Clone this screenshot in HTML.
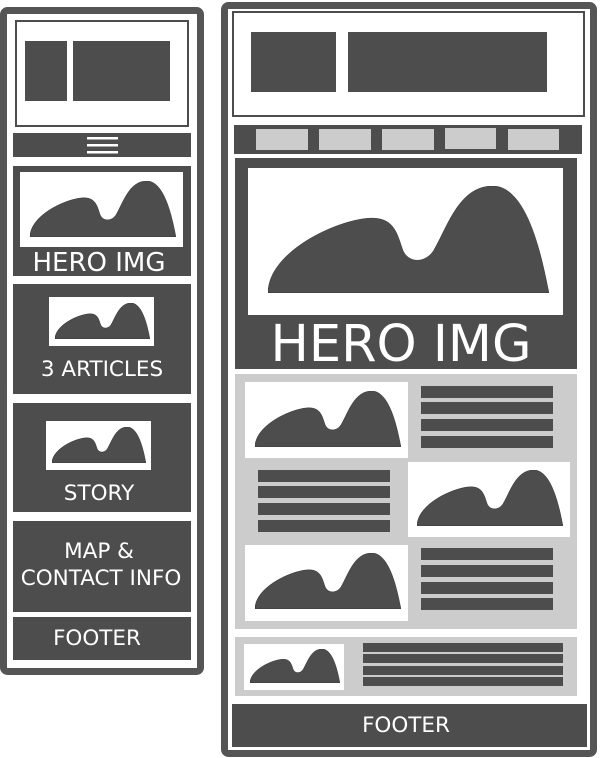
<!DOCTYPE html>
<html><head><meta charset="utf-8"><style>
html,body{margin:0;padding:0;background:#fff;width:600px;height:758px;overflow:hidden}
svg{display:block}
text{font-family:"DejaVu Sans","Liberation Sans",sans-serif;fill:#fff;text-anchor:middle}
</style></head><body>
<svg width="600" height="758" viewBox="0 0 600 758" xmlns="http://www.w3.org/2000/svg">
<defs>
<symbol id="m" viewBox="0 0 100 40" preserveAspectRatio="none">
<path d="M0 40 C0 24 26 12 37 12 C45 12 46 18 48 24 C50 29 56 29 59 24 C64 15 68 0 80 0 C93 0 98 30 100 40 Z" fill="#4d4d4d" stroke="#222" stroke-width="0.4" vector-effect="non-scaling-stroke"/>
</symbol>
</defs>
<!-- LEFT DEVICE -->
<rect x="3.5" y="10.5" width="197" height="661" rx="4" fill="#fff" stroke="#555" stroke-width="7"/>
<rect x="16" y="21" width="172" height="105" fill="#fff" stroke="#4d4d4d" stroke-width="2"/>
<rect x="25" y="41" width="42" height="60" fill="#4d4d4d"/>
<rect x="73" y="41" width="97" height="60" fill="#4d4d4d"/>
<rect x="13" y="133" width="178" height="24" fill="#4d4d4d"/>
<rect x="87" y="137" width="31" height="2.5" fill="#fff"/>
<rect x="87" y="144" width="31" height="2.5" fill="#fff"/>
<rect x="87" y="151" width="31" height="2.5" fill="#fff"/>
<rect x="13" y="166" width="178" height="110" fill="#4d4d4d"/>
<rect x="20" y="172" width="163" height="75" fill="#fff"/>
<use href="#m" x="30" y="181" width="146" height="56"/>
<text x="99" y="271" font-size="26">HERO IMG</text>
<rect x="13" y="284" width="178" height="110" fill="#4d4d4d"/>
<rect x="49" y="297" width="105" height="49" fill="#fff"/>
<use href="#m" x="55" y="303" width="95" height="36"/>
<text x="102" y="376" font-size="21.5">3 ARTICLES</text>
<rect x="13" y="403" width="178" height="109" fill="#4d4d4d"/>
<rect x="46" y="421" width="105" height="49" fill="#fff"/>
<use href="#m" x="52" y="427" width="94" height="36"/>
<text x="99" y="500" font-size="21.5">STORY</text>
<rect x="13" y="521" width="178" height="91" fill="#4d4d4d"/>
<text x="99" y="558" font-size="21.5">MAP &amp;</text>
<text x="101" y="585" font-size="21.5">CONTACT INFO</text>
<rect x="13" y="617" width="178" height="43" fill="#4d4d4d"/>
<text x="97" y="645" font-size="21.5">FOOTER</text>
<!-- RIGHT DEVICE -->
<rect x="224.5" y="5.5" width="369" height="748" rx="4" fill="#fff" stroke="#555" stroke-width="7"/>
<rect x="233" y="12" width="351" height="104" fill="#fff" stroke="#4d4d4d" stroke-width="2"/>
<rect x="251" y="32" width="85" height="60" fill="#4d4d4d"/>
<rect x="348" y="32" width="199" height="60" fill="#4d4d4d"/>
<rect x="234" y="125" width="348" height="29" fill="#4d4d4d"/>
<rect x="256" y="129" width="52" height="21" fill="#ccc"/>
<rect x="319" y="129" width="52" height="21" fill="#ccc"/>
<rect x="382" y="129" width="52" height="21" fill="#ccc"/>
<rect x="445" y="128" width="51" height="21" fill="#ccc"/>
<rect x="508" y="129" width="51" height="21" fill="#ccc"/>
<rect x="235" y="158" width="342" height="211" fill="#4d4d4d"/>
<rect x="248" y="168" width="315" height="147" fill="#fff"/>
<use href="#m" x="268" y="186" width="281" height="107"/>
<text x="401" y="361" font-size="51">HERO IMG</text>
<rect x="235" y="374" width="342" height="255" fill="#ccc"/>
<rect x="245" y="382" width="163" height="76" fill="#fff"/>
<use href="#m" x="255" y="391" width="146" height="56"/>
<g fill="#4d4d4d">
<rect x="421" y="386" width="132" height="12"/><rect x="421" y="402" width="132" height="12"/><rect x="421" y="419" width="132" height="12"/><rect x="421" y="436" width="132" height="12"/>
<rect x="258" y="470" width="132" height="12"/><rect x="258" y="486" width="132" height="12"/><rect x="258" y="503" width="132" height="12"/><rect x="258" y="520" width="132" height="12"/>
<rect x="421" y="548" width="132" height="12"/><rect x="421" y="565" width="132" height="12"/><rect x="421" y="582" width="132" height="12"/><rect x="421" y="598" width="132" height="12"/>
</g>
<rect x="408" y="462" width="162" height="75" fill="#fff"/>
<use href="#m" x="417" y="470" width="146" height="56"/>
<rect x="245" y="545" width="163" height="76" fill="#fff"/>
<use href="#m" x="255" y="553" width="146" height="56"/>
<rect x="235" y="637" width="342" height="59" fill="#ccc"/>
<rect x="244" y="644" width="100" height="46" fill="#fff"/>
<use href="#m" x="250" y="649" width="90" height="34"/>
<g fill="#4d4d4d">
<rect x="363" y="643" width="200" height="9"/><rect x="363" y="654" width="200" height="9"/><rect x="363" y="666" width="200" height="9"/><rect x="363" y="677" width="200" height="9"/>
</g>
<rect x="232" y="704" width="355" height="43" fill="#4d4d4d"/>
<text x="406" y="732" font-size="21.5">FOOTER</text>
</svg>
</body></html>
